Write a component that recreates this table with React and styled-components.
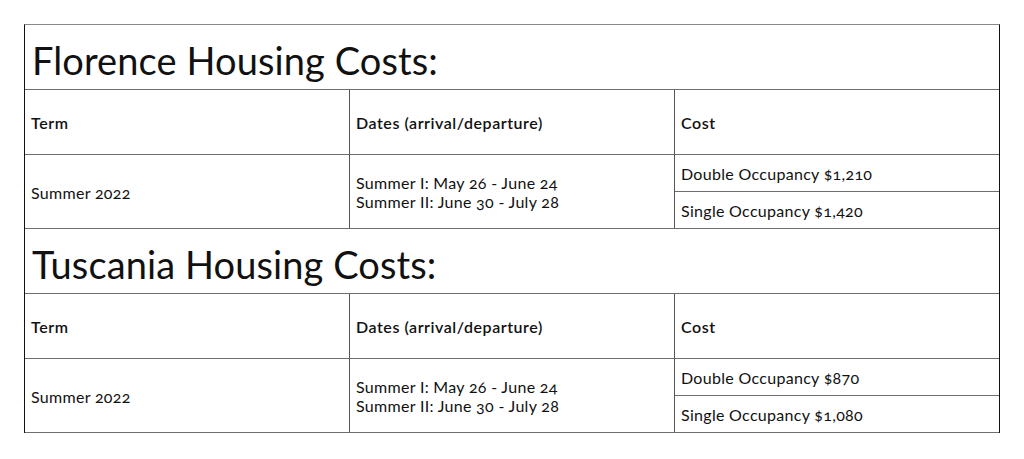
import React from "react";
import styled, { createGlobalStyle } from "styled-components";

const Global = createGlobalStyle`
  html, body { margin: 0; padding: 0; background: #fff; }
  body { padding: 24px; font-family: "Lato", "Open Sans", sans-serif; color: #111; }
`;

const Table = styled.div`
  width: 976px;
  border-top: 1px solid #8a8a8a;
  border-left: 1px solid #111;
  border-right: 1px solid #111;
  box-sizing: border-box;
`;

const Section = styled.div`
  display: grid;
  grid-template-columns: 325px 325px 1fr;
  grid-template-rows: 65px 65px 37px 37px;
`;

const Title = styled.h2`
  grid-column: 1 / -1;
  margin: 0;
  box-sizing: border-box;
  border-bottom: 1px solid #6e6e6e;
  padding: 5px 7px 0;
  display: flex;
  align-items: center;
  font-weight: 400;
  font-size: 38px;
  letter-spacing: 0.1px;
  color: #111;
`;

const Cell = styled.div`
  box-sizing: border-box;
  border-bottom: 1px solid #6e6e6e;
  border-right: ${(p) => (p.$last ? "none" : "1px solid #555")};
  grid-row: ${(p) => p.$rows || "auto"};
  padding: 1px 6px 0;
  display: flex;
  flex-direction: column;
  justify-content: center;
  font-size: 16px;
  font-weight: ${(p) => (p.$head ? 600 : 400)};
  letter-spacing: ${(p) => (p.$head ? "0.55px" : "0.3px")};
  line-height: 19px;
  font-variant-numeric: oldstyle-nums;
  color: #111;
`;

const sections = [
  { title: "Florence Housing Costs:", costs: ["Double Occupancy $1,210", "Single Occupancy $1,420"] },
  { title: "Tuscania Housing Costs:", costs: ["Double Occupancy $870", "Single Occupancy $1,080"] },
];

export default function App() {
  return (
    <>
      <Global />
      <Table>
        {sections.map((s) => (
          <Section key={s.title}>
            <Title>{s.title}</Title>
            <Cell $head>Term</Cell>
            <Cell $head>Dates (arrival/departure)</Cell>
            <Cell $head $last>Cost</Cell>
            <Cell $rows="3 / span 2">Summer 2022</Cell>
            <Cell $rows="3 / span 2">
              <span>Summer I: May 26 - June 24</span>
              <span>Summer II: June 30 - July 28</span>
            </Cell>
            <Cell $last>{s.costs[0]}</Cell>
            <Cell $last>{s.costs[1]}</Cell>
          </Section>
        ))}
      </Table>
    </>
  );
}
